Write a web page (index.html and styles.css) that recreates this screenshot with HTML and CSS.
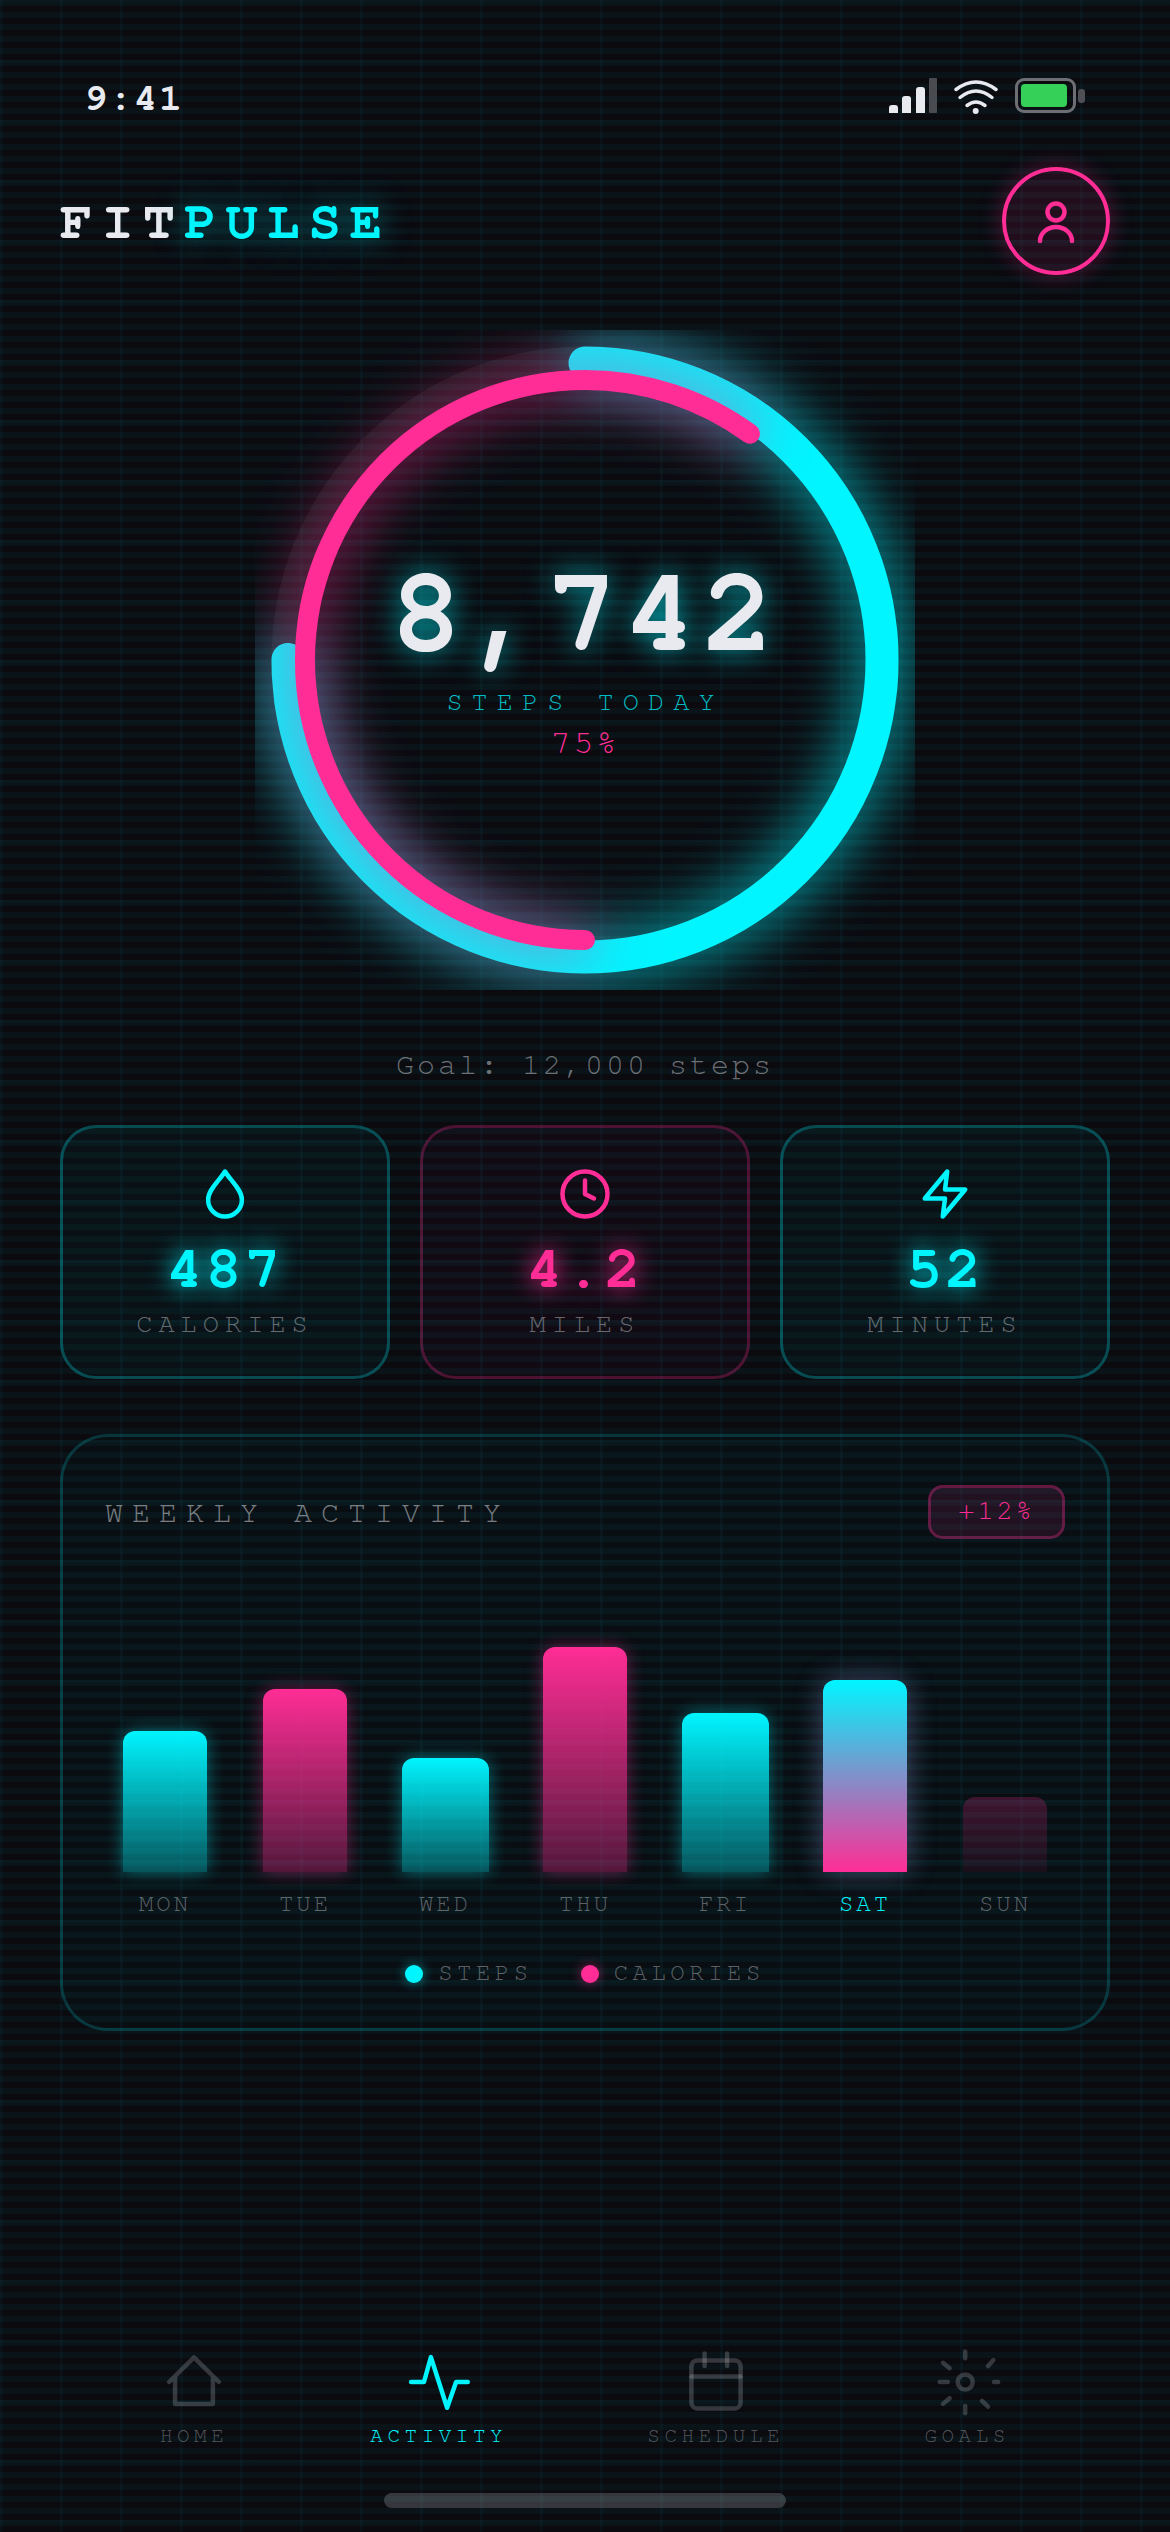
FILE: index.html
```html
<!DOCTYPE html>
<html lang="en">
<head>
<meta charset="utf-8">
<title>FitPulse</title>
<link rel="stylesheet" href="styles.css">
</head>
<body>
<main class="app">
  <div class="status">
    <span class="time">9:41</span>
    <div class="status-icons">
      <div class="signal">
        <i class="sig s1"></i><i class="sig s2"></i><i class="sig s3"></i><i class="sig s4"></i>
      </div>
      <svg class="wifi" viewBox="0 0 44 34" width="44" height="34">
        <path d="M2 9.5Q22-5.5 42 9.5"/>
        <path d="M6 17.5Q22 4.5 38 17.5"/>
        <path d="M13 25.5Q22 18.5 31 25.5"/>
        <circle cx="21.7" cy="31" r="3"/>
      </svg>
      <div class="battery">
        <div class="battery-body"><div class="battery-fill"></div></div>
        <div class="battery-nub"></div>
      </div>
    </div>
  </div>

  <header class="header">
    <div class="logo">FIT<span class="logo-accent">PULSE</span></div>
    <div class="avatar">
      <svg viewBox="0 0 54 54" width="54" height="54" class="avatar-icon">
        <circle cx="27" cy="18" r="8.5"/>
        <path d="M11 47A16 14 0 0 1 43 47"/>
      </svg>
    </div>
  </header>

  <section class="ring">
    <svg class="ring-svg" viewBox="0 0 660 660" width="660" height="660">
      <circle class="ring-track" cx="330" cy="330" r="297"/>
      <circle class="ring-steps" cx="330" cy="330" r="297" transform="rotate(-90 330 330)"/>
      <circle class="ring-cal" cx="330" cy="330" r="280" transform="rotate(90 330 330)"/>
    </svg>
    <div class="ring-text">
      <div class="ring-value">8,742</div>
      <div class="ring-label">STEPS TODAY</div>
      <div class="ring-pct">75%</div>
    </div>
  </section>

  <p class="goal">Goal: 12,000 steps</p>

  <section class="stats">
    <div class="stat">
      <svg class="stat-icon" viewBox="0 0 24 24" width="54" height="54"><path d="M12 2C9.6 6 4.5 10 4.5 14.5a7.5 7.5 0 0 0 15 0C19.500 10 14.400 6 12 2z"/></svg>
      <div class="stat-value">487</div>
      <div class="stat-label">CALORIES</div>
    </div>
    <div class="stat stat-pink">
      <svg class="stat-icon" viewBox="0 0 24 24" width="54" height="54"><circle cx="12" cy="12" r="10"/><path d="M12 6v6l4 2"/></svg>
      <div class="stat-value">4.2</div>
      <div class="stat-label">MILES</div>
    </div>
    <div class="stat">
      <svg class="stat-icon" viewBox="0 0 24 24" width="54" height="54"><path d="M13 2L3 14h9l-1 8 10-12h-9l1-8z"/></svg>
      <div class="stat-value">52</div>
      <div class="stat-label">MINUTES</div>
    </div>
  </section>

  <section class="weekly">
    <div class="weekly-head">
      <h2 class="weekly-title">WEEKLY ACTIVITY</h2>
      <span class="badge">+12%</span>
    </div>
    <div class="chart">
      <div class="col"><div class="bar bar-cyan" style="height:141px"></div><span class="day">MON</span></div>
      <div class="col"><div class="bar bar-pink" style="height:183px"></div><span class="day">TUE</span></div>
      <div class="col"><div class="bar bar-cyan bar-wide" style="height:114px"></div><span class="day">WED</span></div>
      <div class="col"><div class="bar bar-pink" style="height:225px"></div><span class="day">THU</span></div>
      <div class="col"><div class="bar bar-cyan bar-wide" style="height:159px"></div><span class="day">FRI</span></div>
      <div class="col"><div class="bar bar-today" style="height:192px"></div><span class="day day-today">SAT</span></div>
      <div class="col"><div class="bar bar-rest" style="height:75px"></div><span class="day">SUN</span></div>
    </div>
    <div class="legend">
      <div class="legend-item"><i class="dot dot-cyan"></i>STEPS</div>
      <div class="legend-item"><i class="dot dot-pink"></i>CALORIES</div>
    </div>
  </section>

  <nav class="nav">
    <div class="nav-item">
      <svg class="nav-icon" viewBox="0 0 24 24" width="72" height="72"><path d="M3.700 12L12 3.800 20.300 12M5.700 10.500V19.300H18.300V10.500"/></svg>
      <span class="nav-label">HOME</span>
    </div>
    <div class="nav-item nav-active">
      <svg class="nav-icon" viewBox="0 0 24 24" width="72" height="72"><path d="M2.700 12H7L9.300 3.700 14.700 20.600 17.700 12H21.600"/></svg>
      <span class="nav-label">ACTIVITY</span>
    </div>
    <div class="nav-item">
      <svg class="nav-icon" viewBox="0 0 24 24" width="72" height="72"><rect x="3.800" y="4.800" width="16.400" height="16" rx="2"/><path d="M3.800 10.200H20.200M8.200 2.500V6.700M15.700 2.500V6.700"/></svg>
      <span class="nav-label">SCHEDULE</span>
    </div>
    <div class="nav-item">
      <svg class="nav-icon" viewBox="0 0 24 24" width="72" height="72"><circle cx="11.400" cy="12" r="2.500"/><path d="M11.400 1.800V4.100M11.400 20V22.400M2.900 12H5.600M21 12H22.400M4 5.600L6.200 7.400M19 6.700L20.800 4.700M4 19.300L6.200 17.400M17 18.300L19 20.200"/></svg>
      <span class="nav-label">GOALS</span>
    </div>
  </nav>
  <div class="home-indicator"></div>
</main>
</body>
</html>
```
FILE: styles.css
```css
* { box-sizing: border-box; }
html, body { margin: 0; padding: 0; background: #0a0a0f; }

.app {
  width: 1170px;
  height: 2532px;
  overflow: hidden;
  display: flex;
  flex-direction: column;
  font-family: "TeX Gyre Cursor", "Liberation Mono", monospace;
  color: #e8eaf0;
  background-color: #0a0a0f;
  background-image:
    linear-gradient(rgba(0, 245, 255, 0.02) 3px, transparent 3px),
    linear-gradient(90deg, rgba(0, 245, 255, 0.03) 3px, transparent 3px),
    repeating-linear-gradient(180deg, rgba(0, 245, 255, 0.04) 0 6px, transparent 6px 12px);
  background-size: 60px 60px, 60px 60px, auto;
}

/* status bar */
.status {
  margin-top: 78px;
  padding: 0 85px 0 84px;
  height: 36px;
  display: flex;
  justify-content: space-between;
  align-items: flex-start;
}
.time {
  font-size: 39px;
  line-height: 34px;
  font-weight: 700;
  letter-spacing: 1.500px;
}
.status-icons { display: flex; align-items: flex-start; gap: 17px; }
.signal { display: flex; align-items: flex-end; gap: 4.500px; height: 35px; }
.sig { display: block; width: 9px; background: #e8eaf0; border-radius: 3px 3px 0 0; }
.s1 { height: 8px; }
.s2 { height: 17px; }
.s3 { height: 26px; }
.s4 { height: 35px; background: #4a4b50; width: 8px; border-radius: 1px; }
.wifi { margin-top: 2px; fill: #e8eaf0; display: block; }
.wifi path { fill: none; stroke: #e8eaf0; stroke-width: 3.500; stroke-linecap: round; }
.battery { display: flex; align-items: center; gap: 2px; height: 35px; }
.battery-body {
  width: 61px;
  height: 35px;
  border: 3px solid #6e6f75;
  border-radius: 9px;
  padding: 3px;
}
.battery-fill { width: 46px; height: 100%; background: #34d058; border-radius: 4px; }
.battery-nub { width: 7px; height: 14px; background: #4f5055; border-radius: 3px; }

/* header */
.header {
  margin-top: 53px;
  padding: 0 60px;
  display: flex;
  justify-content: space-between;
  align-items: center;
}
.logo {
  font-size: 54px;
  line-height: 54px;
  padding-bottom: 8px;
  font-weight: 700;
  letter-spacing: 9px;
}
.logo-accent { color: #00f5ff; text-shadow: 0 0 30px rgba(0, 245, 255, 0.5); }
.avatar {
  width: 108px;
  height: 108px;
  border: 4.500px solid #ff2d95;
  border-radius: 50%;
  background: rgba(255, 45, 149, 0.1);
  box-shadow: 0 0 24px rgba(255, 45, 149, 0.3);
  display: flex;
  align-items: center;
  justify-content: center;
}
.avatar-icon { fill: none; stroke: #ff2d95; stroke-width: 4.500; stroke-linecap: round; display: block; }

/* ring */
.ring {
  margin: 55px auto 0;
  width: 660px;
  height: 660px;
  display: grid;
  place-items: center;
}
.ring-svg, .ring-text { grid-area: 1 / 1; }
.ring-svg { display: block; }
.ring-svg circle { fill: none; }
.ring-track { stroke: rgba(255, 255, 255, 0.05); stroke-width: 33px; }
.ring-steps {
  stroke: #00f5ff;
  stroke-width: 33px;
  stroke-linecap: round;
  stroke-dasharray: 1399.6 1866.1;
  filter: drop-shadow(0 0 30px rgba(0, 245, 255, 0.85));
}
.ring-cal {
  stroke: #ff2d95;
  stroke-width: 20px;
  stroke-linecap: round;
  stroke-dasharray: 1055.6 1759.3;
  filter: drop-shadow(0 0 30px rgba(255, 45, 149, 0.9));
}
.ring-text { text-align: center; padding-bottom: 19px; }
.ring-value {
  font-size: 120px;
  line-height: 120px;
  font-weight: 700;
  letter-spacing: 6px;
  text-shadow: 0 0 30px rgba(0, 245, 255, 0.7);
}
.ring-label {
  margin-top: 24px;
  font-size: 27px;
  line-height: 30px;
  letter-spacing: 9px;
  color: rgba(0, 245, 255, 0.75);
}
.ring-pct {
  margin-top: 8px;
  font-size: 33px;
  line-height: 36px;
  letter-spacing: 3px;
  color: #ff2d95;
}

/* goal */
.goal {
  margin: 56px 0 2px;
  text-align: center;
  font-size: 30px;
  line-height: 36px;
  letter-spacing: 3px;
  color: rgba(232, 234, 240, 0.45);
}

/* stat cards */
.stats {
  margin-top: 41px;
  padding: 0 60px;
  display: grid;
  grid-template-columns: repeat(3, 330px);
  gap: 30px;
}
.stat {
  --accent: #00f5ff;
  --tint: rgba(0, 245, 255, 0.03);
  --line: rgba(0, 245, 255, 0.25);
  height: 254px;
  padding-top: 39px;
  border: 3px solid var(--line);
  border-radius: 36px;
  background: var(--tint);
  display: flex;
  flex-direction: column;
  align-items: center;
}
.stat-pink {
  --accent: #ff2d95;
  --tint: rgba(255, 45, 149, 0.03);
  --line: rgba(255, 45, 149, 0.25);
}
.stat-icon {
  display: block;
  fill: none;
  stroke: var(--accent);
  stroke-width: 2;
  stroke-linecap: round;
  stroke-linejoin: round;
}
.stat-value {
  margin-top: 13px;
  font-size: 60px;
  line-height: 60px;
  font-weight: 700;
  letter-spacing: 3px;
  color: var(--accent);
  text-shadow: 0 0 24px var(--accent);
}
.stat-label {
  margin-top: 14px;
  font-size: 27px;
  line-height: 30px;
  letter-spacing: 6px;
  color: rgba(232, 234, 240, 0.42);
}

/* weekly card */
.weekly {
  margin: 55px 60px 0;
  height: 597px;
  padding: 48px 42px 0;
  border: 3px solid rgba(0, 245, 255, 0.17);
  border-radius: 48px;
  background: rgba(0, 245, 255, 0.02);
}
.weekly-head {
  display: flex;
  justify-content: space-between;
  align-items: center;
}
.weekly-title {
  margin: 0;
  font-size: 30px;
  line-height: 36px;
  font-weight: 400;
  letter-spacing: 9px;
  color: rgba(232, 234, 240, 0.5);
}
.badge {
  height: 54px;
  padding: 0 27px;
  border: 3px solid rgba(255, 45, 149, 0.3);
  border-radius: 15px;
  background: rgba(255, 45, 149, 0.1);
  font-size: 27px;
  line-height: 43px;
  letter-spacing: 3px;
  color: #ff2d95;
}
.chart {
  margin-top: 108px;
  height: 272px;
  display: flex;
  justify-content: space-between;
  align-items: flex-end;
}
.col {
  width: 120px;
  display: flex;
  flex-direction: column;
  align-items: center;
}
.bar { width: 84px; border-radius: 12px 12px 0 0; }
.bar-wide { width: 87px; }
.bar-cyan {
  background: linear-gradient(180deg, #00f5ff, rgba(0, 245, 255, 0.3));
  box-shadow: 0 0 18px rgba(0, 245, 255, 0.4);
}
.bar-pink {
  background: linear-gradient(180deg, #ff2d95, rgba(255, 45, 149, 0.3));
  box-shadow: 0 0 18px rgba(255, 45, 149, 0.4);
}
.bar-today {
  background: linear-gradient(180deg, #00f5ff, #ff2d95);
  box-shadow: 0 0 30px rgba(0, 245, 255, 0.25), 0 0 30px rgba(255, 45, 149, 0.25);
}
.bar-rest {
  background: linear-gradient(180deg, #ff2d95, rgba(255, 45, 149, 0.3));
  opacity: 0.22;
}
.day {
  margin-top: 17px;
  padding-bottom: 3px;
  font-size: 24px;
  line-height: 27px;
  letter-spacing: 3px;
  color: rgba(232, 234, 240, 0.38);
}
.day-today { color: #00f5ff; }
.legend {
  margin-top: 39px;
  display: flex;
  justify-content: center;
  gap: 48px;
}
.legend-item {
  display: flex;
  align-items: center;
  gap: 15px;
  font-size: 24px;
  line-height: 27px;
  letter-spacing: 4.500px;
  color: rgba(232, 234, 240, 0.38);
}
.dot { display: block; width: 18px; height: 18px; margin-top: 4px; border-radius: 50%; }
.dot-cyan { background: #00f5ff; box-shadow: 0 0 12px rgba(0, 245, 255, 0.5); }
.dot-pink { background: #ff2d95; box-shadow: 0 0 12px rgba(255, 45, 149, 0.5); }

/* bottom nav */
.nav {
  margin-top: auto;
  padding: 0 90px 0 88px;
  display: flex;
  justify-content: space-around;
}
.nav-item {
  display: flex;
  flex-direction: column;
  align-items: center;
  color: rgba(232, 234, 240, 0.33);
}
.nav-icon {
  display: block;
  fill: none;
  stroke: rgba(232, 234, 240, 0.2);
  stroke-width: 1.500;
  stroke-linecap: round;
  stroke-linejoin: round;
}
.nav-label {
  margin: 5px 0 3px;
  font-size: 21px;
  line-height: 24px;
  letter-spacing: 4.500px;
}
.nav-active { color: #00f5ff; }
.nav-active .nav-icon { stroke: #00f5ff; }
.home-indicator {
  flex: none;
  margin: 43px auto 24px;
  width: 402px;
  height: 15px;
  border-radius: 9px;
  background: rgba(232, 234, 240, 0.2);
}
```
